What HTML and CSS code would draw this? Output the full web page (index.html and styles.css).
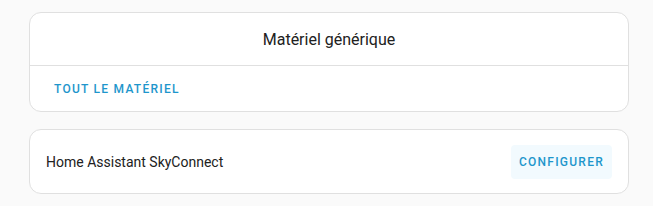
FILE: index.html
```
<!DOCTYPE html>
<html>
<head>
<meta charset="utf-8">
<link rel="stylesheet" href="styles.css">
</head>
<body>
<div class="page">
  <div class="card">
    <div class="card-header">Matériel générique</div>
    <div class="card-actions">
      <button class="btn">TOUT LE MATÉRIEL</button>
    </div>
  </div>
  <div class="card row-card">
    <div class="row-label">Home Assistant SkyConnect</div>
    <button class="btn btn-tinted">CONFIGURER</button>
  </div>
</div>
</body>
</html>
```
FILE: styles.css
```
html, body {
  margin: 0;
  padding: 0;
  background: #fafafa;
  font-family: Roboto, "Noto Sans", sans-serif;
}
.page {
  padding: 12px 24px 0 29px;
  display: flex;
  flex-direction: column;
  gap: 17px;
  width: 600px;
}
.card {
  background: #ffffff;
  border: 1px solid #e0e0e0;
  border-radius: 12px;
  box-sizing: border-box;
  width: 600px;
}
.card-header {
  height: 53px;
  display: flex;
  align-items: center;
  justify-content: center;
  font-size: 16px;
  color: #212121;
  border-bottom: 1px solid #e0e0e0;
  box-sizing: border-box;
}
.card-actions {
  height: 45px;
  display: flex;
  align-items: center;
  padding-left: 16px;
}
.btn {
  font-family: Roboto, "Noto Sans", sans-serif;
  font-size: 12px;
  font-weight: 500;
  letter-spacing: 1.25px;
  color: #1e96cc;
  background: transparent;
  border: none;
  padding: 0 8px;
  height: 36px;
  border-radius: 4px;
}
.row-card {
  height: 65px;
  display: flex;
  align-items: center;
  justify-content: space-between;
  padding: 0 16px;
}
.row-label {
  font-size: 14px;
  color: #212121;
}
.btn-tinted {
  background: #f2fafe;
  height: 34px;
  padding: 0 8px;
}
```
